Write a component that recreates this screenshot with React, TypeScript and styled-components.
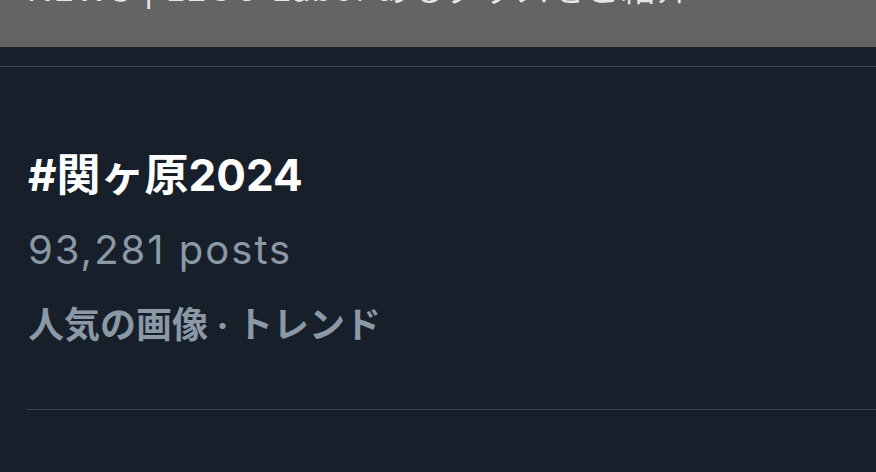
import React from "react";
import styled, { createGlobalStyle } from "styled-components";

const Global = createGlobalStyle`
  html, body { margin: 0; padding: 0; background: #17202a; }
  body { font-family: Inter, "Noto Sans CJK JP", sans-serif; }
`;

const Page = styled.div`
  width: 876px;
  height: 472px;
  overflow: hidden;
  background: #17202a;
  display: flex;
  flex-direction: column;
`;

const Banner = styled.div`
  height: 47px;
  background: #646464;
  overflow: hidden;
  display: flex;
  align-items: flex-end;
  padding-left: 27px;
`;

const BannerText = styled.div`
  color: #e6e6e6;
  font-size: 34px;
  line-height: 40px;
  margin-bottom: 38px;
  white-space: nowrap;
  letter-spacing: 1px;
  font-family: Inter, "Noto Sans CJK JP", sans-serif;
`;

const TopRule = styled.div`
  height: 1px;
  margin-top: 19px;
  background: #38444d;
`;

const Trend = styled.div`
  display: flex;
  flex-direction: column;
  padding: 84px 0 0 28px;
`;

const Title = styled.div`
  color: #ffffff;
  font-weight: 700;
  font-size: 44px;
  line-height: 48px;
  font-family: Inter, "Noto Sans CJK JP", sans-serif;
`;

const Count = styled.div`
  color: #8b98a5;
  font-size: 40px;
  line-height: 48px;
  letter-spacing: 2px;
  margin-top: 27px;
  font-family: Inter, "Noto Sans CJK JP", sans-serif;
`;

const Meta = styled.div`
  color: #8b98a5;
  font-weight: 700;
  font-size: 36px;
  line-height: 40px;
  margin-top: 31px;
  font-family: Inter, "Noto Sans CJK JP", sans-serif;
`;

const BottomRule = styled.div`
  height: 1px;
  margin: 64px 0 0 27px;
  background: #38444d;
`;

export default function App() {
  return (
    <>
      <Global />
      <Page>
        <Banner>
          <BannerText>NEWS | LEGO Labo: あるグッズをご紹介</BannerText>
        </Banner>
        <TopRule />
        <Trend>
          <Title>#関ヶ原2024</Title>
          <Count>93,281 posts</Count>
          <Meta>人気の画像 · トレンド</Meta>
        </Trend>
        <BottomRule />
      </Page>
    </>
  );
}
